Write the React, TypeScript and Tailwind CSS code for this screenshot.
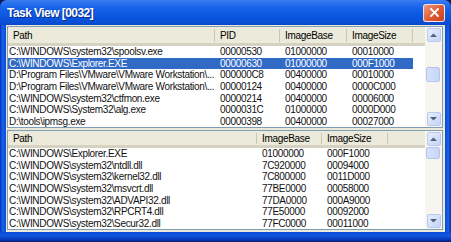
import React from "react";

const FONT = { fontFamily: '"Liberation Sans", Arial, sans-serif' };

type Col = { label: string; w: number; first?: boolean };

const topCols: Col[] = [
  { label: "Path", w: 207, first: true },
  { label: "PID", w: 65 },
  { label: "ImageBase", w: 67 },
  { label: "ImageSize", w: 66 },
];

const bottomCols: Col[] = [
  { label: "Path", w: 249, first: true },
  { label: "ImageBase", w: 65 },
  { label: "ImageSize", w: 66 },
];

const topRows: string[][] = [
  ["C:\\WINDOWS\\system32\\spoolsv.exe", "00000530", "01000000", "00010000"],
  ["C:\\WINDOWS\\Explorer.EXE", "00000630", "01000000", "000F1000"],
  ["D:\\Program Files\\VMware\\VMware Workstation\\...", "000000C8", "00400000", "00010000"],
  ["D:\\Program Files\\VMware\\VMware Workstation\\...", "00000124", "00400000", "0000C000"],
  ["C:\\WINDOWS\\system32\\ctfmon.exe", "00000214", "00400000", "00006000"],
  ["C:\\WINDOWS\\System32\\alg.exe", "0000031C", "01000000", "0000D000"],
  ["D:\\tools\\ipmsg.exe", "00000398", "00400000", "00027000"],
];

const bottomRows: string[][] = [
  ["C:\\WINDOWS\\Explorer.EXE", "01000000", "000F1000"],
  ["C:\\WINDOWS\\system32\\ntdll.dll", "7C920000", "00094000"],
  ["C:\\WINDOWS\\system32\\kernel32.dll", "7C800000", "0011D000"],
  ["C:\\WINDOWS\\system32\\msvcrt.dll", "77BE0000", "00058000"],
  ["C:\\WINDOWS\\system32\\ADVAPI32.dll", "77DA0000", "000A9000"],
  ["C:\\WINDOWS\\system32\\RPCRT4.dll", "77E50000", "00092000"],
  ["C:\\WINDOWS\\system32\\Secur32.dll", "77FC0000", "00011000"],
];

function Arrow({ up }: { up?: boolean }) {
  return (
    <svg width="7" height="4" viewBox="0 0 7 4">
      {up ? (
        <path d="M0 4 L3.5 0.5 L7 4 Z" fill="#4d6185" />
      ) : (
        <path d="M0 0 L3.5 3.5 L7 0 Z" fill="#4d6185" />
      )}
    </svg>
  );
}

function ScrollButton({ up }: { up?: boolean }) {
  return (
    <div className="flex h-[14px] w-[14px] items-center justify-center rounded-[2px] border border-[#b9c9ef] bg-[linear-gradient(135deg,#e6eefc,#c4d4f7)]">
      <Arrow up={up} />
    </div>
  );
}

function Scrollbar({ thumbTop, thumbH }: { thumbTop: number; thumbH: number }) {
  return (
    <div className="flex w-[17px] shrink-0 flex-col items-center bg-[#f6f5f0] py-[1px]">
      <ScrollButton up />
      <div className="relative w-full flex-1">
        <div
          className="absolute left-[1px] w-[14px] rounded-[2px] border border-[#b4c4ec] bg-[linear-gradient(90deg,#d6e2fb,#c6d6f8)]"
          style={{ top: thumbTop, height: thumbH }}
        />
      </div>
      <ScrollButton />
    </div>
  );
}

function Header({ cols, headerH }: { cols: Col[]; headerH: number }) {
  return (
    <div
      className="flex shrink-0 border-b-[3px] border-[#d6d2c2] bg-[#ebeadb] text-[#000]"
      style={{ height: headerH }}
    >
      {cols.map((c) => (
        <div
          key={c.label}
          className="relative flex shrink-0 items-center pl-[5px]"
          style={{ width: c.w }}
        >
          <span>{c.label}</span>
          <span className="absolute right-0 top-[2px] bottom-[1px] w-[1px] bg-[#c9c6b5]" />
        </div>
      ))}
      <div className="flex-1" />
    </div>
  );
}

function ListPane({
  cols,
  rows,
  selected,
  height,
  headerH,
  thumbTop,
  thumbH,
}: {
  cols: Col[];
  rows: string[][];
  selected?: number;
  height: number;
  headerH: number;
  thumbTop: number;
  thumbH: number;
}) {
  const total = cols.reduce((a, c) => a + c.w, 0);
  return (
    <div className="flex shrink-0 border border-[#7f9db9] bg-white" style={{ height }}>
      <div className="flex min-w-0 flex-1 flex-col overflow-hidden">
        <Header cols={cols} headerH={headerH} />
        <div className="flex flex-col">
          {rows.map((r, i) => {
            const sel = i === selected;
            return (
              <div
                key={i}
                className={`flex h-[11.6px] items-center ${sel ? "bg-[#316ac5] text-white" : "text-[#111]"}`}
                style={{ width: total }}
              >
                {cols.map((c, j) => (
                  <div
                    key={j}
                    className={`shrink-0 overflow-hidden whitespace-nowrap ${c.first ? "pl-[1px]" : "pl-[5px]"}`}
                    style={{ width: c.w }}
                  >
                    {r[j]}
                  </div>
                ))}
              </div>
            );
          })}
        </div>
      </div>
      <Scrollbar thumbTop={thumbTop} thumbH={thumbH} />
    </div>
  );
}

export default function App() {
  return (
    <div
      className="h-[242px] w-[451px] overflow-hidden bg-[#0b1b55] text-[10px] tracking-[-0.33px]"
      style={FONT}
    >
      <div className="flex h-full w-full flex-col overflow-hidden rounded-t-[7px] bg-[#0a46d2]">
        {/* Title bar */}
        <div className="flex h-[25px] shrink-0 items-center justify-between bg-[linear-gradient(180deg,#3d7cf0_0%,#2a72ef_12%,#1462e8_35%,#0b57de_65%,#0a50d6_88%,#0846c6_100%)] pl-[7px] pr-[6px]">
          <span className="text-[12px] font-bold tracking-[-0.55px] text-white [text-shadow:1px_1px_0_#0a2a8a]">
            Task View [0032]
          </span>
          <div className="flex h-[18px] w-[22px] items-center justify-center rounded-[3px] border border-white/80 bg-[linear-gradient(135deg,#ee9a80,#dc5a34_55%,#c8401e)]">
            <svg width="9" height="9" viewBox="0 0 9 9">
              <path d="M1 1 L8 8 M8 1 L1 8" stroke="white" strokeWidth="1.8" strokeLinecap="square" />
            </svg>
          </div>
        </div>
        {/* Body */}
        <div className="flex flex-1 overflow-hidden">
          <div className="w-[6px] shrink-0 bg-[linear-gradient(90deg,#0a30b8,#1664ea_45%,#0a4ad6)]" />
          <div className="flex flex-1 flex-col bg-[#ece9d8] pl-[1px] pr-[2px] pt-[1px]">
            <ListPane
              cols={topCols}
              rows={topRows}
              selected={1}
              height={102}
              headerH={19}
              thumbTop={25}
              thumbH={15}
            />
            <div className="h-[2px] shrink-0" />
            <ListPane
              cols={bottomCols}
              rows={bottomRows}
              height={100}
              headerH={17}
              thumbTop={1}
              thumbH={12}
            />
            <div className="flex-1" />
          </div>
          <div className="w-[6px] shrink-0 bg-[linear-gradient(90deg,#0a4ad6,#1660e6_55%,#0a2aa8)]" />
        </div>
        <div className="h-[10px] shrink-0 bg-[linear-gradient(180deg,#0a4ad6,#1058e0_40%,#0a36b8_75%,#071e70)]" />
      </div>
    </div>
  );
}
